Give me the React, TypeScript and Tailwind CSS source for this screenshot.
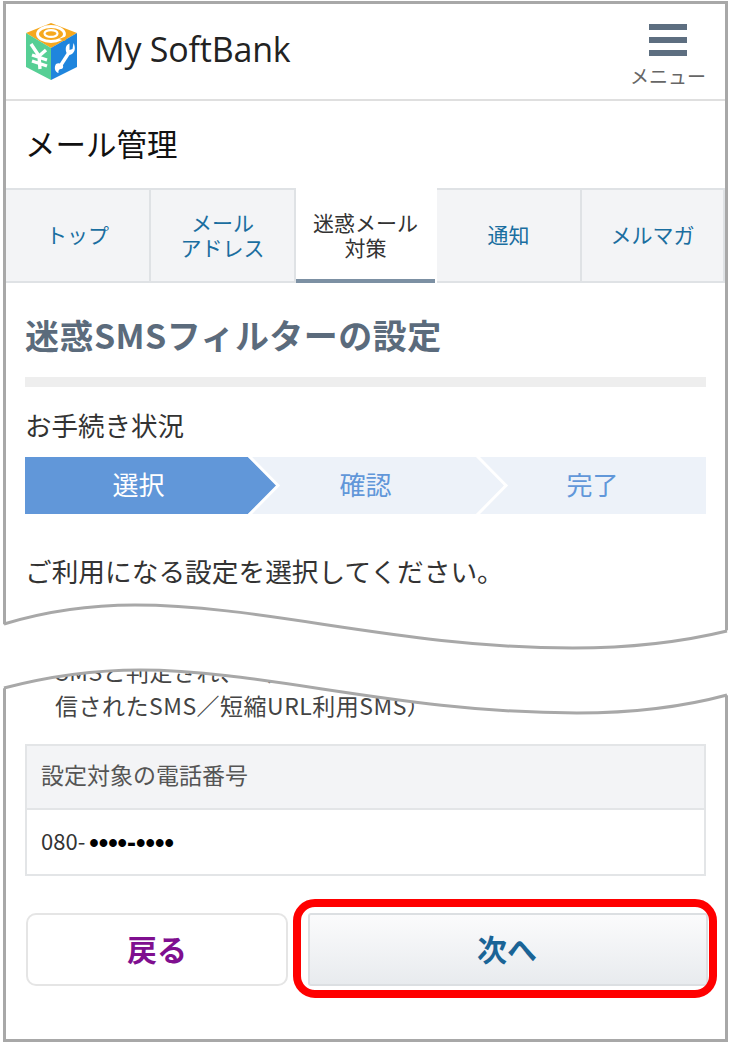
import React from 'react';

const JP = "font-['Noto_Sans_CJK_JP','Noto_Sans',sans-serif]";

const Logo = () => (
    <svg width="54" height="58" viewBox="0 0 54 58" className="flex-none">
        <polygon points="26,0 52,10 26,25 1,10" fill="#f6a81e" />
        <polygon points="1,10 26,25 26,57 1,44" fill="#56cf95" />
        <polygon points="52,10 26,25 26,57 52,44" fill="#1f85dd" />
        {/* @ mark */}
        <ellipse cx="26" cy="11" rx="13.5" ry="7.5" fill="none" stroke="#fff" strokeWidth="2.8" />
        <ellipse cx="26" cy="10.5" rx="6.5" ry="3.4" fill="none" stroke="#fff" strokeWidth="2.2" />
        <path d="M34 16 L40 18 L42 13 Z" fill="#f6a81e" />
        {/* yen */}
        <path d="M6 21 L14 33 L21 27 M14 33 L15 46 M7 32 L22 37 M7 38 L22 43" fill="none" stroke="#fff" strokeWidth="3.4" />
        {/* wrench */}
        <path d="M34 45 L45 28" fill="none" stroke="#fff" strokeWidth="3.4" />
        <path d="M41 24 C40 28 42 33 46 31.5 C50 29.5 51 25 48.5 20 L47.5 26 L44.5 27 L44.5 20.5 C43 21 41.5 22 41 24 Z" fill="#fff" />
        <path d="M31 41 C29 44 29.5 49 33.5 50 C33 48 34 46 36 46 C38 46 38.5 44 38 42.5 C36 40 33 39.5 31 41 Z" fill="#fff" />
    </svg>
);

const Tab = ({ children, active }: { children: React.ReactNode; active?: boolean }) => (
    <div
        className={
            active
                ? 'flex items-center justify-center text-center text-[21px] leading-[25px] pt-[3px] text-[#333] border-b-[4px] border-[#7c90a3] mr-[2px]'
                : 'flex items-center justify-center text-center text-[21px] leading-[25px] pb-[2px] text-[#1a6ea0] bg-[#f3f4f6] border-2 border-l-0 border-[#dfe2e5]'
        }
    >
        <div>{children}</div>
    </div>
);

const Stepper = () => (
    <div className="relative mx-[19px] h-[57px] grid grid-cols-3 bg-[#edf2f9] text-[26px] text-[#6197d9]">
        <div className="absolute left-0 top-0 h-full w-[253px] bg-[#6197d9] [clip-path:polygon(0_0,223px_0,100%_50%,223px_100%,0_100%)]"></div>
        {/* white chevrons between the steps */}
        <svg className="absolute left-[222px] top-0" width="34" height="57" viewBox="0 0 34 57">
            <polyline points="2,-1 31,28.5 2,58" fill="none" stroke="#fff" strokeWidth="3" />
        </svg>
        <svg className="absolute left-[450px] top-0" width="34" height="57" viewBox="0 0 34 57">
            <polyline points="2,-1 31,28.5 2,58" fill="none" stroke="#fff" strokeWidth="3" />
        </svg>
        <div className="relative flex items-center justify-center pb-[4px] text-white">選択</div>
        <div className="relative flex items-center justify-center pb-[4px]">確認</div>
        <div className="relative flex items-center justify-center pb-[4px]">完了</div>
    </div>
);

export default function App() {
    return (
        <div className={`relative w-[729px] h-[1043px] bg-white overflow-hidden ${JP}`}>
            <div className="ml-[3px] mt-[1px] w-[725px] h-[1041px] border-[3px] border-[#a8a8a8] overflow-hidden">

                {/* Header */}
                <div className="h-[97px] flex items-center border-b-2 border-[#dfdfdf] pl-[19px] pr-[19px]">
                    <Logo />
                    <span className="ml-[15px] mb-[4px] text-[34px] text-[#222] font-['Open_Sans',sans-serif] font-normal tracking-[-0.2px]">My SoftBank</span>
                    <div className="ml-auto pt-[8px] flex flex-col items-center">
                        <div className="w-[38px] flex flex-col gap-[7px]">
                            <div className="h-[6px] bg-[#5d6e80]"></div>
                            <div className="h-[6px] bg-[#5d6e80]"></div>
                            <div className="h-[6px] bg-[#5d6e80]"></div>
                        </div>
                        <div className="mt-[8px] text-[19px] leading-[24px] text-[#666]">メニュー</div>
                    </div>
                </div>

                <div className="h-[87px] flex items-center pl-[19px] pb-[2px] text-[30.5px] text-[#111]">メール管理</div>

                {/* Tabs */}
                <div className="h-[95px] grid grid-cols-[145px_145px_141px_145px_1fr]">
                    <Tab>トップ</Tab>
                    <Tab>メール<br />アドレス</Tab>
                    <Tab active>迷惑メール<br />対策</Tab>
                    <Tab>通知</Tab>
                    <Tab>メルマガ</Tab>
                </div>

                <div className="h-[94px] pt-[29px] pl-[19px] text-[34px] leading-[46px] font-bold text-[#5b6b7c] whitespace-nowrap tracking-[0.45px]">迷惑SMSフィルターの設定</div>
                <div className="mx-[19px] h-[10px] bg-[#eeeeee]"></div>
                <div className="h-[70px] pt-[20px] pl-[19px] text-[26.5px] leading-[36px] text-[#333]">お手続き状況</div>

                <Stepper />

                <div className="mt-[39px] h-[36px] pl-[19px] text-[26.7px] leading-[36px] text-[#333] whitespace-nowrap">ご利用になる設定を選択してください。</div>

                {/* Below the cut */}
                <div className="mt-[65px] pl-[49px] text-[23px] leading-[34px] text-[#444] whitespace-nowrap tracking-[0.5px]">
                    <div>SMSと判定され、一定</div>
                    <div>信されたSMS／短縮URL利用SMS）</div>
                </div>

                <div className="mt-[22px] mx-[19px] border-2 border-[#e3e5e7]">
                    <div className="h-[64px] flex items-center pl-[14px] pb-[5px] bg-[#f3f4f6] border-b-2 border-[#e3e5e7] text-[23px] text-[#555]">設定対象の電話番号</div>
                    <div className="h-[64px] flex items-center pl-[14px] pb-[4px] text-[22px] text-[#333]">
                        080-
                        <span className="ml-[4px] pt-[7px] font-['Liberation_Sans',sans-serif] text-[27px] leading-none font-bold text-black">••••-••••</span>
                    </div>
                </div>

                <div className="mt-[37px] ml-[20px] flex gap-[20px]">
                    <div className="w-[262px] h-[73px] flex items-center justify-center pb-[2px] rounded-[10px] border-2 border-[#e5e5e5] text-[30px] font-bold text-[#7f0f8f]">戻る</div>
                    <div className="w-[400px] h-[73px] flex items-center justify-center pb-[2px] pr-[2px] rounded-[3px] border-2 border-[#dcdfe2] bg-gradient-to-b from-[#fbfbfc] to-[#e8ebee] text-[30px] font-bold text-[#1a6496]">次へ</div>
                </div>
            </div>

            {/* Red annotation round the next button */}
            <div className="absolute left-[293px] top-[899px] w-[424px] h-[99px] border-[8px] border-[#ff0000] rounded-[22px]"></div>

            {/* Torn page cut */}
            <svg className="absolute left-0 top-[600px]" width="729" height="120" viewBox="0 0 729 120">
                <path
                    d="M0 26 L4 24 C50 10 90 5 135 5 C265 5 400 48 573 48 C640 48 690 40 729 30 L729 95 C690 105 640 113 577 113 C400 113 265 70 140 70 C95 70 50 76 4 88 L0 90 Z"
                    fill="#fff"
                />
                <path d="M4 24 C50 10 90 5 135 5 C265 5 400 48 573 48 C640 48 690 40 727 31" fill="none" stroke="#a8a8a8" strokeWidth="3" />
                <path d="M4 88 C50 76 95 70 140 70 C265 70 400 113 577 113 C640 113 690 105 727 95" fill="none" stroke="#a8a8a8" strokeWidth="3" />
            </svg>
        </div>
    );
}
